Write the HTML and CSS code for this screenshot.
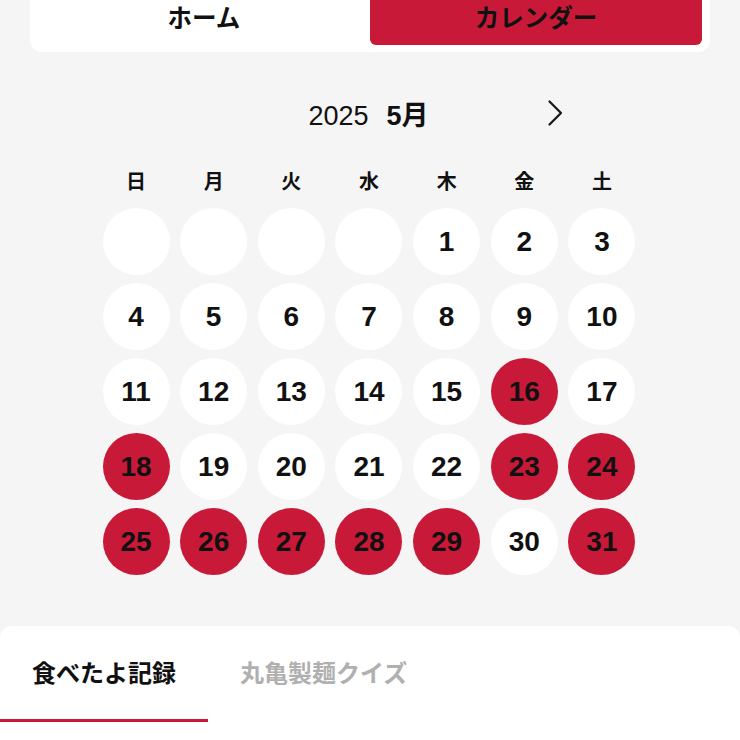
FILE: index.html
```html
<!DOCTYPE html>
<html lang="ja">
<head>
<meta charset="utf-8">
<link rel="stylesheet" href="styles.css">
</head>
<body>
<div class="switch">
  <div class="switch-tab">ホーム</div>
  <div class="switch-tab active">カレンダー</div>
</div>

<div class="month-head">
  <span class="nav nav-hidden"></span>
  <div class="month-title"><span class="year">2025</span><span class="month">5月</span></div>
  <span class="nav">
    <svg width="24" height="30" viewBox="0 0 24 30"><polyline points="6.5,3.5 18,15 6.5,26.5" fill="none" stroke="#1a1a1a" stroke-width="2.3" stroke-linecap="round" stroke-linejoin="round"/></svg>
  </span>
</div>

<div class="weekdays">
  <span>日</span><span>月</span><span>火</span><span>水</span><span>木</span><span>金</span><span>土</span>
</div>

<div class="grid">
  <div class="day"></div><div class="day"></div><div class="day"></div><div class="day"></div>
  <div class="day">1</div><div class="day">2</div><div class="day">3</div>
  <div class="day">4</div><div class="day">5</div><div class="day">6</div><div class="day">7</div>
  <div class="day">8</div><div class="day">9</div><div class="day">10</div>
  <div class="day">11</div><div class="day">12</div><div class="day">13</div><div class="day">14</div>
  <div class="day">15</div><div class="day on">16</div><div class="day">17</div>
  <div class="day on">18</div><div class="day">19</div><div class="day">20</div><div class="day">21</div>
  <div class="day">22</div><div class="day on">23</div><div class="day on">24</div>
  <div class="day on">25</div><div class="day on">26</div><div class="day on">27</div><div class="day on">28</div>
  <div class="day on">29</div><div class="day">30</div><div class="day on">31</div>
</div>

<div class="sheet">
  <div class="tabs">
    <div class="tab active">食べたよ記録</div>
    <div class="tab">丸亀製麺クイズ</div>
  </div>
</div>
</body>
</html>
```

FILE: styles.css
```css
html, body {
  margin: 0;
  padding: 0;
}
body {
  background: #f5f5f5;
  font-family: "Liberation Sans", "Noto Sans CJK JP", sans-serif;
  color: #111;
  width: 740px;
  height: 740px;
  overflow: hidden;
}
.switch {
  margin: 0 30px;
  background: #fff;
  border-radius: 0 0 12px 12px;
  padding: 0 8px 7px;
  display: flex;
}
.switch-tab {
  flex: 1;
  height: 45px;
  line-height: 33px;
  text-align: center;
  font-family: "Noto Sans CJK JP", sans-serif;
  font-weight: 700;
  font-size: 24.5px;
  color: #111;
}
.switch-tab.active {
  background: #c81a38;
  border-radius: 0 0 6px 6px;
}
.month-head {
  margin: 41px auto 0;
  width: 394px;
  height: 40px;
  display: flex;
  align-items: center;
  justify-content: space-between;
}
.nav {
  width: 24px;
  height: 30px;
  display: flex;
}
.month-title {
  display: flex;
  align-items: baseline;
  gap: 18px;
  padding-right: 3px;
}
.year {
  font-weight: 400;
  font-size: 27px;
}
.month {
  font-weight: 700;
  font-size: 27px;
}
.weekdays {
  margin: 35px auto 0;
  width: 533px;
  padding-right: 2px;
  display: grid;
  grid-template-columns: repeat(7, 67px);
  column-gap: 10.67px;
  height: 26px;
  line-height: 26px;
  text-align: center;
  font-family: "Noto Sans CJK JP", sans-serif;
  font-weight: 600;
  font-size: 20px;
}
.grid {
  margin: 14px auto 0;
  width: 533px;
  padding-right: 2px;
  display: grid;
  grid-template-columns: repeat(7, 67px);
  column-gap: 10.67px;
  row-gap: 8px;
}
.day {
  width: 67px;
  height: 67px;
  border-radius: 50%;
  background: #fff;
  display: flex;
  align-items: center;
  justify-content: center;
  font-weight: 700;
  font-size: 28px;
  color: #111;
}
.day.on {
  background: #c81a38;
}
.sheet {
  margin-top: 51px;
  background: #fff;
  border-radius: 12px 12px 0 0;
  height: 140px;
}
.tabs {
  display: flex;
}
.tab {
  padding: 34px 32px 35px;
  line-height: 24px;
  font-family: "Noto Sans CJK JP", sans-serif;
  font-weight: 700;
  font-size: 24px;
  color: #b0b0b0;
  border-bottom: 3px solid transparent;
}
.tab.active {
  color: #111;
  border-bottom-color: #c81a38;
}
```
